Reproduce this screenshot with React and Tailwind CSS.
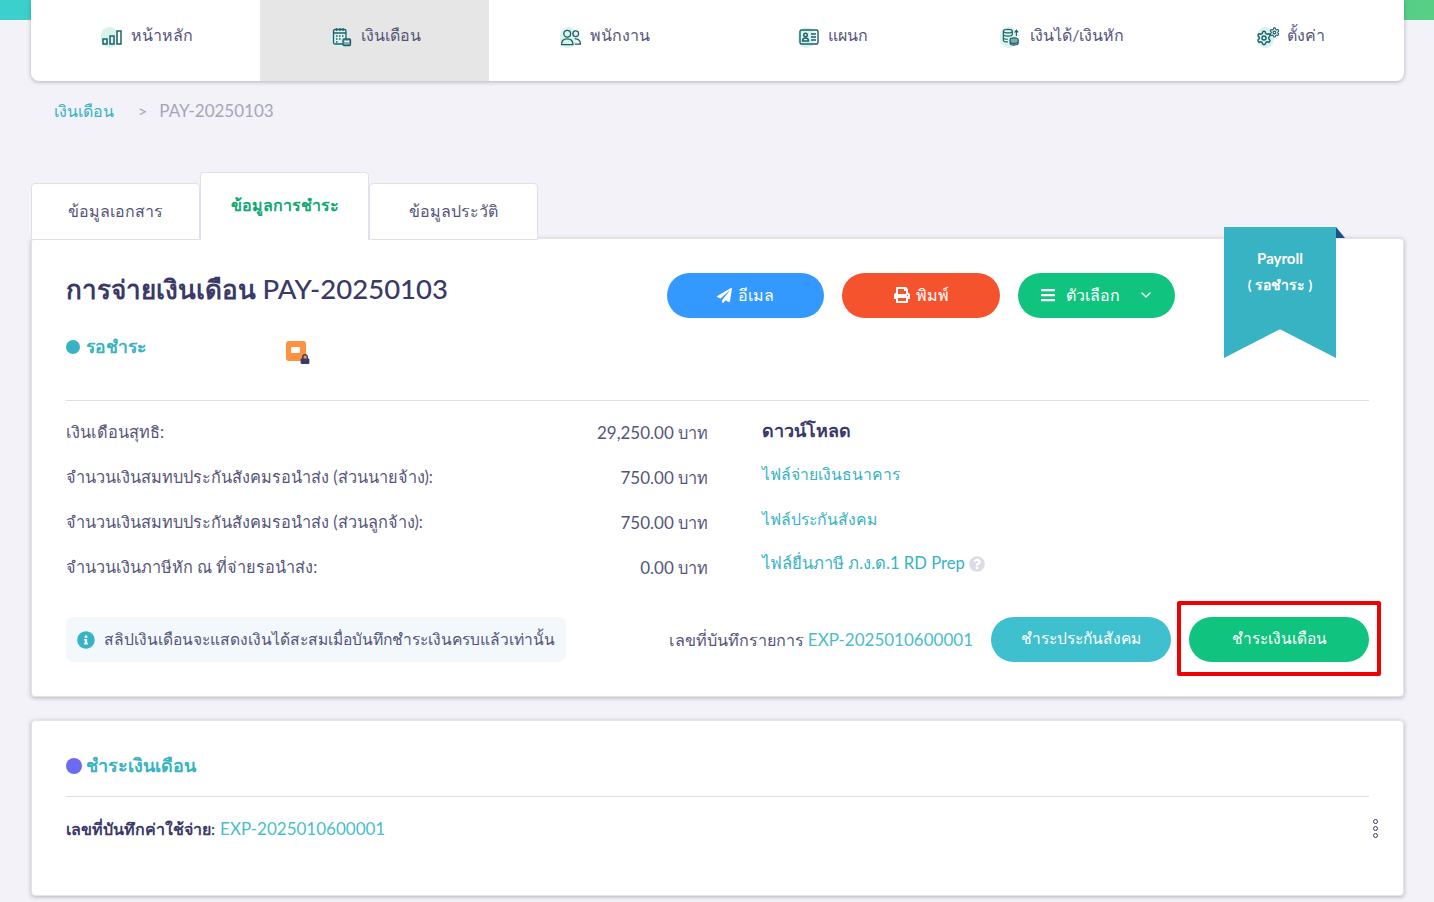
import React from 'react';
import { ChevronDown, Settings } from 'lucide-react';
import { FaPaperPlane, FaPrint, FaBars, FaInfoCircle, FaQuestionCircle, FaLock } from 'react-icons/fa';

const Blob = ({ children }) => (
  <span className="relative inline-flex w-[22px] h-[22px] items-center justify-center mt-[5px]">
    <span className="absolute left-0 top-[1px] w-[17px] h-[21px] rounded-full bg-[#d8f3ec]" />
    <span className="relative flex">{children}</span>
  </span>
);

const BarsIcon = () => (
  <svg width="20" height="15" viewBox="0 0 20 15" fill="none" stroke="#1f5f6b" strokeWidth="1.5">
    <rect x="1" y="9" width="4" height="5" />
    <rect x="8" y="6" width="4" height="8" />
    <rect x="15" y="1" width="4" height="13" />
  </svg>
);

const CalendarIcon = () => (
  <svg width="20" height="20" viewBox="0 0 20 20" fill="none" stroke="#1f5f6b" strokeWidth="1.3">
    <rect x="1.5" y="2.5" width="12.5" height="14.5" rx="1.5" />
    <path d="M1.5 6h12.5M4.5 1v3M8 1v3M11 1v3" />
    <path d="M4 9h1.5M7 9h1.5M10 9h1.5M4 12h1.5M7 12h1.5M4 15h1.5" />
    <rect x="11" y="12" width="7.5" height="6.5" rx="1" fill="#7fa9ac" />
    <path d="M12.5 14.5h4.5" stroke="#fff" />
  </svg>
);

const UsersIcon = () => (
  <svg width="22" height="17" viewBox="0 0 22 18" fill="none" stroke="#1f5f6b" strokeWidth="1.4">
    <circle cx="7" cy="5" r="3.6" />
    <circle cx="16" cy="5" r="3" />
    <path d="M1 16.5c0-4 2.500-6 6-6s6 2 6 6zM15 10.500c3.500-.5 6 1.500 6 5.500h-6" />
  </svg>
);

const CardIcon = () => (
  <svg width="20" height="16" viewBox="0 0 20 16" fill="none" stroke="#1f5f6b" strokeWidth="1.4">
    <rect x="1" y="1" width="18" height="14" rx="1.5" />
    <circle cx="6.500" cy="6" r="1.800" />
    <path d="M3.500 12c0-2 1-3 3-3s3 1 3 3zM12 5h5M12 8h5M12 11h5" />
  </svg>
);

const CoinsIcon = () => (
  <svg width="18" height="20" viewBox="0 0 20 20" fill="none" stroke="#1f5f6b" strokeWidth="1.3">
    <ellipse cx="6.500" cy="3.500" rx="5" ry="2" />
    <path d="M1.500 3.500v10c0 1 2 2 5 2M1.500 7c0 1 2 2 5 2s5-1 5-2M1.500 10.500c0 1 2 2 5 2M11.500 3.500v4" />
    <ellipse cx="13.500" cy="13" rx="4.500" ry="2" fill="#7fa9ac" />
    <path d="M9 13v4c0 1 2 2 4.500 2s4.500-1 4.500-2v-4M9 15c0 1 2 2 4.500 2s4.500-1 4.500-2" fill="#7fa9ac" />
    <path d="M16 9V3M14 5l2-2.500L18 5" />
  </svg>
);

const GearsIcon = () => (
  <span className="flex items-start w-[24px] h-[18px]">
    <Settings size={16} strokeWidth={2.200} color="#1f5f6b" className="mt-[2px]" />
    <Settings size={11} strokeWidth={2.400} color="#1f5f6b" className="-mt-[1px] -ml-[3px]" />
  </span>
);

const NAV_ITEMS = [
  { label: 'หน้าหลัก', icon: BarsIcon },
  { label: 'เงินเดือน', icon: CalendarIcon, active: true },
  { label: 'พนักงาน', icon: UsersIcon },
  { label: 'แผนก', icon: CardIcon },
  { label: 'เงินได้/เงินหัก', icon: CoinsIcon },
  { label: 'ตั้งค่า', icon: GearsIcon },
];

const ROWS = [
  { label: 'เงินเดือนสุทธิ:', amount: '29,250.00', link: null },
  { label: 'จำนวนเงินสมทบประกันสังคมรอนำส่ง (ส่วนนายจ้าง):', amount: '750.00', link: 'ไฟล์จ่ายเงินธนาคาร' },
  { label: 'จำนวนเงินสมทบประกันสังคมรอนำส่ง (ส่วนลูกจ้าง):', amount: '750.00', link: 'ไฟล์ประกันสังคม' },
  { label: 'จำนวนเงินภาษีหัก ณ ที่จ่ายรอนำส่ง:', amount: '0.00', link: 'ไฟล์ยื่นภาษี ภ.ง.ด.1 RD Prep', help: true },
];

function NavBar() {
  return (
    <div className="grid grid-cols-6 h-[81px] -mt-5 relative bg-white rounded-b-lg overflow-hidden shadow-[0_1px_4px_rgba(60,60,90,0.35)]">
      {NAV_ITEMS.map(item => {
        const Icon = item.icon;
        return (
          <div key={item.label} className={`flex items-center justify-center gap-[8px] pb-[12px] pl-[3px] ${item.active ? 'bg-[#e6e6e6]' : ''}`}>
            <Blob><Icon /></Blob>
            <span className="text-[16px] leading-6 text-[#55557a]">{item.label}</span>
          </div>
        );
      })}
    </div>
  );
}

function Tabs() {
  return (
    <div className="flex items-end h-[68px] relative z-10 -mb-[2px]">
      <div className="w-[169px] h-[57px] flex items-center justify-center text-[16px] text-[#55557a] bg-white border border-[#e0e0ec] rounded-t pb-[1px]">ข้อมูลเอกสาร</div>
      <div className="w-[169px] h-[68px] flex justify-center pt-[20px] text-[16px] font-semibold text-[#12a874] bg-white border border-b-0 border-[#e0e0ec] rounded-t">ข้อมูลการชำระ</div>
      <div className="w-[169px] h-[57px] flex items-center justify-center text-[16px] text-[#55557a] bg-white border border-[#e0e0ec] rounded-t pb-[1px]">ข้อมูลประวัติ</div>
    </div>
  );
}

function ActionButton({ className, children }) {
  return (
    <button className={`h-[45px] rounded-full flex items-center justify-center pb-[1px] text-white text-[16px] ${className}`}>
      {children}
    </button>
  );
}

function Ribbon() {
  return (
    <div className="absolute left-[1192px] -top-[12px]">
      <div className="absolute left-[112px] top-0 w-0 h-0 border-l-[9px] border-l-[#1d4f8c] border-t-[11px] border-t-transparent" />
      <div className="w-[112px] h-[131px] bg-[#37b3c4] [clip-path:polygon(0_0,100%_0,100%_100%,50%_78%,0_100%)] flex flex-col items-center pt-[21px] gap-[7px] text-white text-[14px] leading-[20px] font-bold">
        <span className="text-[15px]">Payroll</span>
        <span>( รอชำระ )</span>
      </div>
    </div>
  );
}

function PayrollCard() {
  return (
    <div className="relative h-[459px] bg-white border border-[#e3e3ec] rounded px-[34px] shadow-[0_1px_4px_rgba(60,60,90,0.35)]">
      <Ribbon />
      <div className="flex h-[162px] border-b border-[#dedee6]">
        <div className="w-[601px] pt-[30px]">
          <h1 className="text-[26px] leading-[40px] font-semibold text-[#3a3a68]">การจ่ายเงินเดือน <span className="text-[27.5px] font-medium">PAY-20250103</span></h1>
          <div className="flex items-center mt-[26px] h-[24px]">
            <span className="w-[14px] h-[14px] rounded-full bg-[#37b3c4]" />
            <span className="ml-[6px] w-[200px] text-[17.5px] font-semibold text-[#37b3c4]">รอชำระ</span>
            <span className="relative w-[20px] h-[20px] rounded-[3px] bg-[#ff9240] mt-[7px]">
              <span className="absolute left-[5px] top-[6px] w-[9px] h-[6px] rounded-[1px] bg-[#fff]" />
              <FaLock size={10} className="absolute -right-[4px] -bottom-[3px] text-[#3a3a68]" />
            </span>
          </div>
        </div>
        <div className="flex gap-[18px] pt-[34px] items-start">
          <ActionButton className="w-[157px] bg-[#3399ff] gap-[6px]">
            <FaPaperPlane size={15} />อีเมล
          </ActionButton>
          <ActionButton className="w-[158px] bg-[#f4532e] gap-[6px]">
            <FaPrint size={16} />พิมพ์
          </ActionButton>
          <ActionButton className="w-[157px] bg-[#10c37e] gap-[10px]">
            <FaBars size={16} />ตัวเลือก<ChevronDown size={16} className="ml-[8px]" />
          </ActionButton>
        </div>
      </div>

      <div className="flex pt-[9px]">
        <div className="w-[642px]">
          {ROWS.map(row => (
            <div key={row.label} className="h-[45px] flex items-center justify-between text-[16.3px] text-[#55557a]">
              <span>{row.label}</span>
              <span><span className="text-[17px]">{row.amount}</span> บาท</span>
            </div>
          ))}
        </div>
        <div className="ml-[54px]">
          <div className="h-[45px] flex items-center pb-[5px] text-[18px] font-semibold text-[#3a3a68]">ดาวน์โหลด</div>
          {ROWS.slice(1).map(row => (
            <div key={row.link} className={`h-[45px] flex items-center gap-[4px] pb-[8px] text-[#37b3c4] ${row.help ? 'text-[16.6px]' : 'text-[15.75px]'}`}>
              {row.link}
              {row.help && <FaQuestionCircle size={16} color="#dcdce8" />}
            </div>
          ))}
        </div>
      </div>

      <div className="flex items-center mt-[27px]">
        <div className="w-[500px] h-[45px] rounded-lg bg-[#f2f8fc] flex items-center px-[11px] gap-[9px] text-[15.6px] text-[#55557a] whitespace-nowrap">
          <FaInfoCircle size={18} color="#37b3c4" className="shrink-0" />
          สลิปเงินเดือนจะแสดงเงินได้สะสมเมื่อบันทึกชำระเงินครบแล้วเท่านั้น
        </div>
        <div className="ml-auto flex items-center">
          <span className="text-[16.2px] text-[#55557a]">เลขที่บันทึกรายการ <span className="text-[17px] text-[#4bbccb]">EXP-2025010600001</span></span>
          <ActionButton className="w-[180px] ml-[18px] bg-[#3fc0cf] !text-[15.6px]">ชำระประกันสังคม</ActionButton>
          <div className="relative ml-[18px]">
            <ActionButton className="w-[180px] bg-[#10c37e] !text-[15.5px]">ชำระเงินเดือน</ActionButton>
            <div className="absolute -left-[12px] -right-[12px] -top-[16px] -bottom-[14px] border-4 border-[#f00000] rounded-[2px]" />
          </div>
        </div>
      </div>
    </div>
  );
}

function PaymentCard() {
  return (
    <div className="mt-[23px] h-[176px] bg-white border border-[#e3e3ec] rounded px-[34px] shadow-[0_1px_4px_rgba(60,60,90,0.35)]">
      <div className="h-[76px] pt-[14px] flex items-center gap-[4px] border-b border-[#dedee6]">
        <span className="w-[16px] h-[16px] rounded-full bg-[#6c6cf2]" />
        <span className="text-[18px] font-semibold text-[#37b3c4]">ชำระเงินเดือน</span>
      </div>
      <div className="flex items-center justify-between h-[63px] text-[16px]">
        <span className="font-semibold text-[#3a3a68]">เลขที่บันทึกค่าใช้จ่าย: <span className="ml-[1px] text-[17px] font-normal text-[#4bbccb]">EXP-2025010600001</span></span>
        <span className="flex flex-col gap-[2px] mr-[-9px]">
          <span className="w-[5px] h-[5px] rounded-full border border-[#3a3a68]" />
          <span className="w-[5px] h-[5px] rounded-full border border-[#3a3a68]" />
          <span className="w-[5px] h-[5px] rounded-full border border-[#3a3a68]" />
        </span>
      </div>
    </div>
  );
}

export default function App() {
  return (
    <div className="h-[902px] overflow-hidden bg-[#f2f2f8] font-['Lato','Noto_Sans',sans-serif]">
      <div className="h-5 bg-[linear-gradient(90deg,#3bd0cc,#57cf85)]" />
      <div className="px-[31px] pr-[30px]">
        <NavBar />
        <div className="flex items-center h-[60px] pl-[23px] text-[16px]">
          <span className="text-[#37b3c4]">เงินเดือน</span>
          <span className="ml-[24px] text-[#a5a5b8]">&gt;</span>
          <span className="ml-[12px] text-[17px] text-[#a5a5b8]">PAY-20250103</span>
        </div>
        <div className="h-[31px]" />
        <Tabs />
        <PayrollCard />
        <PaymentCard />
      </div>
    </div>
  );
}
